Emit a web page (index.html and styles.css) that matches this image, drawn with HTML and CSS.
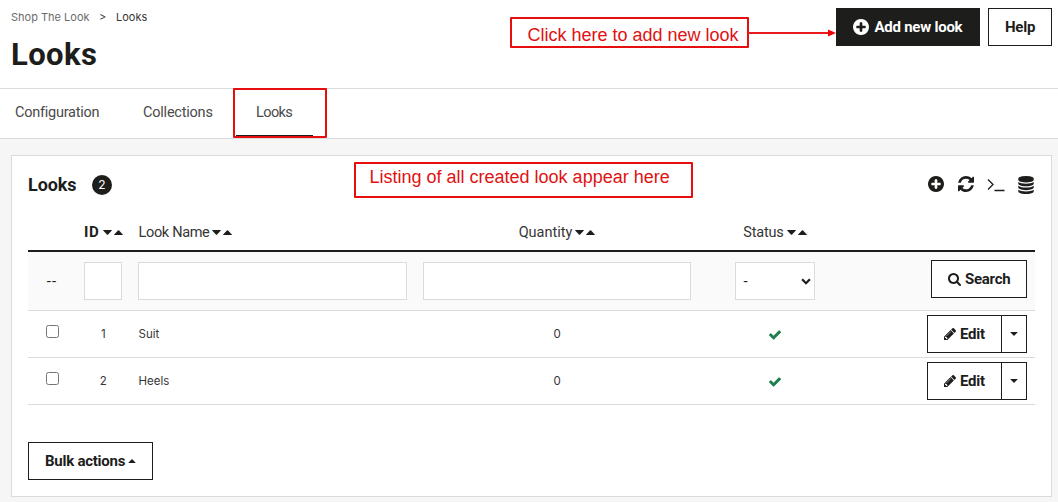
FILE: index.html
```html
<!DOCTYPE html>
<html lang="en">
<head>
<meta charset="utf-8">
<title>Looks</title>
<link rel="stylesheet" href="styles.css">
</head>
<body>
<svg class="sprite" aria-hidden="true">
  <symbol id="plus" viewBox="128 128 1536 1536"><path d="M1344 960v-128q0-26-19-45t-45-19h-256v-256q0-26-19-45t-45-19h-128q-26 0-45 19t-19 45v256h-256q-26 0-45 19t-19 45v128q0 26 19 45t45 19h256v256q0 26 19 45t45 19h128q26 0 45-19t19-45v-256h256q26 0 45-19t19-45zm320-64q0 209-103 385.5t-279.5 279.5-385.5 103-385.5-103-279.5-279.5-103-385.5 103-385.5 279.5-279.5 385.5-103 385.5 103 279.5 279.5 103 385.500z"/></symbol>
  <symbol id="refresh" viewBox="128 128 1536 1536"><path d="M1639 1056q0 5-1 7-64 268-268 434.500t-478 166.500q-146 0-282.500-55t-243.500-157l-129 129q-19 19-45 19t-45-19-19-45v-448q0-26 19-45t45-19h448q26 0 45 19t19 45-19 45l-137 137q71 66 161 102t187 36q134 0 250-65t186-179q11-17 53-117 8-23 30-23h192q13 0 22.500 9.500t9.500 22.500zm25-800v448q0 26-19 45t-45 19h-448q-26 0-45-19t-19-45 19-45l138-138q-148-137-349-137-134 0-250 65t-186 179q-11 17-53 117-8 23-30 23h-199q-13 0-22.500-9.500t-9.500-22.500v-7q65-268 270-434.500t480-166.500q146 0 284 55.500t245 156.500l130-129q19-19 45-19t45 19 19 45z"/></symbol>
  <symbol id="database" viewBox="128 0 1536 1792"><path d="M896 768q237 0 443-43t325-127v170q0 69-103 128t-280 93.500-385 34.500-385-34.500-280-93.500-103-128v-170q119 84 325 127t443 43zm0 768q237 0 443-43t325-127v170q0 69-103 128t-280 93.500-385 34.500-385-34.500-280-93.500-103-128v-170q119 84 325 127t443 43zm0-384q237 0 443-43t325-127v170q0 69-103 128t-280 93.500-385 34.500-385-34.500-280-93.500-103-128v-170q119 84 325 127t443 43zm0-1152q208 0 385 34.500t280 93.500 103 128v128q0 69-103 128t-280 93.500-385 34.500-385-34.500-280-93.500-103-128v-128q0-69 103-128t280-93.500 385-34.500z"/></symbol>
  <symbol id="search" viewBox="64 128 1664 1664"><path d="M1216 832q0-185-131.500-316.500t-316.500-131.500-316.500 131.500-131.500 316.500 131.500 316.500 316.500 131.500 316.500-131.500 131.500-316.500zm512 832q0 52-38 90t-90 38q-54 0-90-38l-343-342q-179 124-399 124-143 0-273.500-55.500t-225-150-150-225-55.500-273.500 55.500-273.500 150-225 225-150 273.500-55.500 273.500 55.500 225 150 150 225 55.500 273.500q0 220-124 399l343 343q37 37 37 90z"/></symbol>
  <symbol id="pencil" viewBox="128 149 1515 1515"><path d="M491 1536l91-91-235-235-91 91v107h128v128h107zm523-928q0-22-22-22-10 0-17 7l-542 542q-7 7-7 17 0 22 22 22 10 0 17-7l542-542q7-7 7-17zm-54-192l416 416-832 832h-416v-416zm683 96q0 53-37 90l-166 166-416-416 166-165q36-38 90-38 53 0 91 38l235 234q37 39 37 91z"/></symbol>
  <symbol id="check" viewBox="121 334 1550 1188"><path d="M1671 566q0 40-28 68l-724 724-136 136q-28 28-68 28t-68-28l-136-136-362-362q-28-28-28-68t28-68l136-136q28-28 68-28t68 28l294 295 656-657q28-28 68-28t68 28l136 136q28 28 28 68z"/></symbol>
  <symbol id="down" viewBox="0 0 9 5"><path d="M.4 0h8.200q.6 0 .2.500l-3.700 4q-.6.600-1.200 0l-3.700-4q-.4-.5.200-.5z"/></symbol>
  <symbol id="up" viewBox="0 0 9 5"><path d="M.4 5h8.200q.6 0 .2-.5l-3.700-4q-.6-.6-1.200 0l-3.700 4q-.4.500.2.500z"/></symbol>
</svg>

<header class="header">
  <div class="heading">
    <nav class="breadcrumb"><span class="crumb">Shop The Look</span><span class="sep">&gt;</span><span class="current">Looks</span></nav>
    <h1 class="title">Looks</h1>
  </div>
  <div class="actions">
    <button class="btn btn-dark"><svg class="i16"><use href="#plus"/></svg><span class="t-add">Add new look</span></button>
    <button class="btn btn-help"><span class="t-help">Help</span></button>
  </div>
</header>
<nav class="tabs">
  <a class="tab tab-conf">Configuration</a>
  <a class="tab tab-coll">Collections</a>
  <a class="tab tab-looks">Looks</a>
</nav>

<main class="panel">
  <div class="panel-head">
    <h2 class="panel-title">Looks</h2><span class="count">2</span>
    <div class="tools">
      <svg class="i16"><use href="#plus"/></svg>
      <svg class="i16"><use href="#refresh"/></svg>
      <svg class="term" viewBox="0 0 18 14"><path d="M1 1.500l5 5-5 5M7.500 12.500h10" fill="none" stroke="#1d1d1b" stroke-width="1.300"/></svg>
      <svg class="db"><use href="#database"/></svg>
    </div>
  </div>
  <div class="row head-row">
    <span></span>
    <span class="th th-id"><b>ID</b><svg class="caret"><use href="#down"/></svg><svg class="caret"><use href="#up"/></svg></span>
    <span class="th"><span class="t-name">Look Name</span><svg class="caret"><use href="#down"/></svg><svg class="caret"><use href="#up"/></svg></span>
    <span class="th center"><span class="t-qty">Quantity</span><svg class="caret"><use href="#down"/></svg><svg class="caret"><use href="#up"/></svg></span>
    <span class="th center"><span class="t-status">Status</span><svg class="caret"><use href="#down"/></svg><svg class="caret"><use href="#up"/></svg></span>
    <span></span>
  </div>
  <div class="row filter-row">
    <span class="dashes">--</span>
    <input class="field" type="text">
    <input class="field" type="text">
    <input class="field" type="text">
    <div class="select"><span>-</span><svg class="chev" viewBox="0 0 9 6"><path d="M1 1l3.500 3.500L8 1" fill="none" stroke="#1d1d1b" stroke-width="2"/></svg></div>
    <div class="cell-end"><button class="btn btn-search"><svg class="i13"><use href="#search"/></svg><span class="t-search">Search</span></button></div>
  </div>
  <div class="row data-row">
    <input class="check" type="checkbox">
    <span class="td center">1</span><span class="td">Suit</span><span class="td center">0</span>
    <span class="td center"><svg class="ok"><use href="#check"/></svg></span>
    <div class="cell-end"><button class="btn btn-edit"><svg class="i12"><use href="#pencil"/></svg><span class="t-edit">Edit</span></button><button class="btn btn-drop"><svg class="caret"><use href="#down"/></svg></button></div>
  </div>
  <div class="row data-row">
    <input class="check" type="checkbox">
    <span class="td center">2</span><span class="td">Heels</span><span class="td center">0</span>
    <span class="td center"><svg class="ok"><use href="#check"/></svg></span>
    <div class="cell-end"><button class="btn btn-edit"><svg class="i12"><use href="#pencil"/></svg><span class="t-edit">Edit</span></button><button class="btn btn-drop"><svg class="caret"><use href="#down"/></svg></button></div>
  </div>
  <button class="btn btn-bulk"><span class="t-bulk">Bulk actions</span><svg class="caret"><use href="#up"/></svg></button>
</main>

<div class="note note-add">Click here to add new look</div>
<svg class="arrow" viewBox="0 0 88 8"><path d="M0 4h81" stroke="#e81a1a" stroke-width="2"/><path d="M80 .5l8 3.500-8 3.500z" fill="#f00000"/></svg>
<div class="note note-tab"></div>
<div class="note note-list">Listing of all created look appear here</div>
</body>
</html>
```
FILE: styles.css
```css
* { box-sizing: border-box; }
body { margin: 0; height: 502px; overflow: hidden; background: #f6f6f6; color: #1d1d1b; font-family: Roboto, "Liberation Sans", sans-serif; font-size: 15px; }
svg { display: block; flex: none; fill: currentColor; }
.sprite { position: absolute; width: 0; height: 0; }
.i16 { width: 16px; height: 16px; }
.i13 { width: 13px; height: 13px; }
.i12 { width: 12px; height: 12px; }
.caret { width: 9px; height: 5px; }

.header { height: 89px; background: #fff; border-bottom: 1px solid #dbdbdb; display: flex; justify-content: space-between; padding: 8px 6px 0 11px; }
.breadcrumb { display: flex; height: 18px; line-height: 18px; font-family: Inter, sans-serif; font-size: 11px; }
.crumb { color: #6c6c6c; width: 88px; }
.sep { width: 17px; color: #444; }
.current { color: #363636; }
.title { margin: 9px 0 0; font-size: 31px; line-height: 40px; font-weight: 700; letter-spacing: .4px; }
.actions { display: flex; gap: 8px; }
.btn { height: 38px; border: 1px solid #1d1d1b; background: #fff; color: #1d1d1b; font: 700 15px Roboto, sans-serif; letter-spacing: -.25px; display: flex; align-items: center; justify-content: flex-start; padding: 0 0 0 16px; white-space: nowrap; }
.btn-dark { width: 144px; background: #1d1d1b; color: #fff; gap: 5.5px; }
.t-add { letter-spacing: -.25px; }
.btn-help { width: 64px; }

.tabs { height: 50px; background: #fff; border-bottom: 1px solid #dbdbdb; display: flex; padding-left: 15px; line-height: 48px; color: #4a4a4a; font-size: 14.5px; letter-spacing: -.25px; }
.tab { height: 48px; }
.tab-conf { width: 128px; }
.tab-coll { width: 93px; letter-spacing: -.22px; }
.tab-looks { width: 77px; padding-left: 20px; border-bottom: 2px solid #1d1d1b; letter-spacing: -.6px; }

.panel { margin: 16px 6px 0 11px; height: 342px; background: #fff; border: 1px solid #dbdbdb; padding: 0 16px; }
.panel-head { height: 58px; display: flex; align-items: center; }
.panel-title { margin: 0 0 2px; width: 64px; font-size: 18px; font-weight: 700; letter-spacing: -.1px; }
.count { width: 20px; height: 20px; border-radius: 50%; background: #1d1d1b; color: #fff; font: 12px/20px Inter, sans-serif; text-align: center; }
.tools { margin: 0 0 2px auto; display: flex; align-items: center; padding-right: 1px; }
.tools .i16 { margin-right: 14px; }
.term { width: 18px; height: 14px; margin: 2px 13px 0 -1px; }
.db { width: 16px; height: 18px; margin-top: 1px; }

.row { display: grid; grid-template-columns: 48px 54px 285px 284px 151px 1fr; align-items: center; }
.head-row { height: 38px; border-bottom: 2px solid #1d1d1b; }
.th { display: flex; align-items: center; padding: 0 8px; gap: 2px; line-height: 20px; color: #363636; font-size: 14.5px; }
.th .caret, .th b { color: #1d1d1b; }
.th b { font-size: 15px; letter-spacing: .5px; margin-right: 2px; }
.t-name, .t-qty, .t-status { line-height: 22px; margin-top: 2px; margin-right: 1px; }
.t-name { letter-spacing: -.33px; padding-left: .5px; }
.t-status { letter-spacing: -.2px; margin-left: 1px; }
.center { justify-content: center; text-align: center; }
.filter-row { height: 59px; background: #fafafa; border-bottom: 1px solid #dbdbdb; }
.dashes { text-align: center; letter-spacing: 1px; }
.field { margin: 0 8px; min-width: 0; height: 38px; border: 1px solid #dbdbdb; background: #fff; border-radius: 0; }
.select { justify-self: center; width: 80px; height: 38px; border: 1px solid #dbdbdb; background: #fff; display: flex; align-items: center; justify-content: space-between; padding: 0 3px 0 8px; }
.chev { width: 10px; height: 7px; }
.cell-end { display: flex; justify-content: flex-end; padding-right: 8px; }
.btn-search { width: 96px; gap: 4px; margin-bottom: 4px; }
.data-row { height: 47px; border-bottom: 1px solid #dbdbdb; }
.check { margin: 0 0 5px 18px; width: 13px; height: 13px; }
.td { padding: 0 8px 0 8.5px; font-family: Inter, sans-serif; font-size: 11.5px; color: #363636; }
.ok { width: 12px; height: 10px; margin: 1px auto 0; color: #1f7e4d; }
.btn-edit { width: 75px; gap: 4px; }
.btn-drop { width: 26px; margin-left: -1px; padding: 0 0 0 8px; }
.btn-drop .caret, .btn-bulk .caret { width: 8px; height: 4px; }
.btn-bulk { width: 125px; margin-top: 37px; gap: 3px; }

.note { position: absolute; border: 2px solid #e60e0e; border-radius: 1px; color: #e01212; font: 18px "Liberation Sans", Arial, sans-serif; white-space: nowrap; }
.note-add { left: 510px; top: 17px; width: 239px; height: 31px; padding-left: 15.5px; line-height: 32px; }
.note-tab { left: 233px; top: 88px; width: 94px; height: 50px; }
.note-list { left: 354px; top: 162px; width: 339px; height: 36px; padding-left: 13.5px; line-height: 26px; }
.arrow { position: absolute; left: 748px; top: 29px; width: 88px; height: 8px; }
```
